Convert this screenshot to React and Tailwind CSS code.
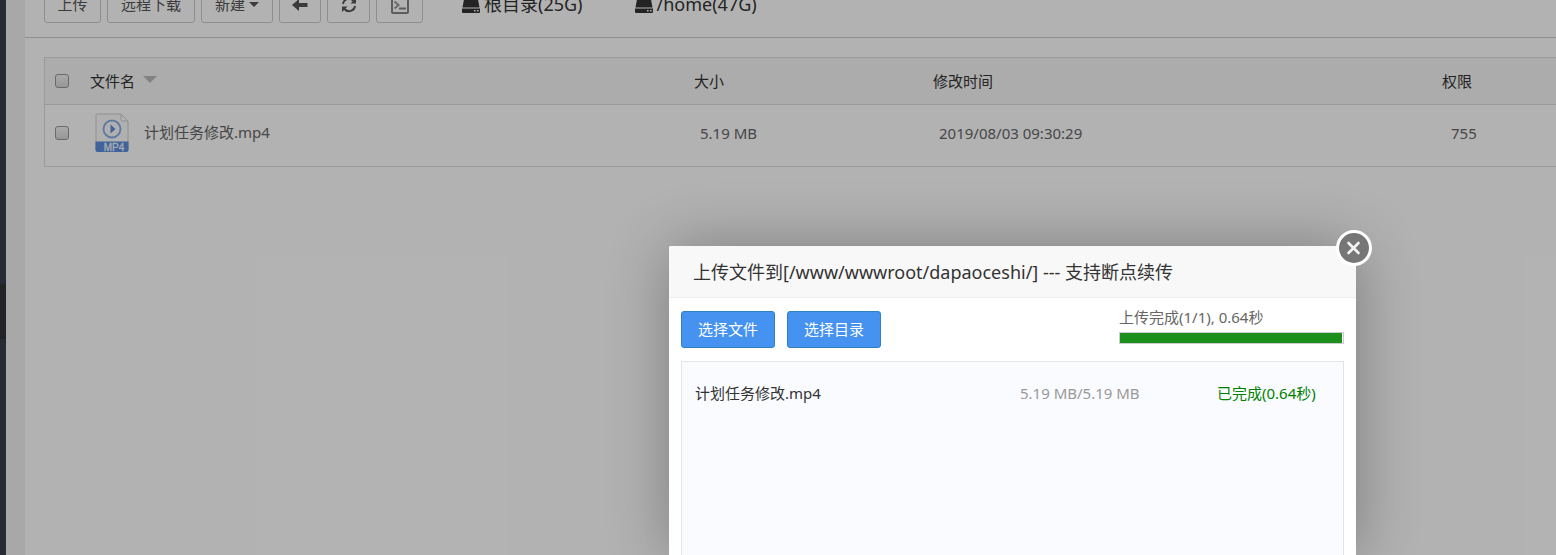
import React from 'react';

const files = [
  { name: '计划任务修改.mp4', size: '5.19 MB', time: '2019/08/03 09:30:29', mode: '755' },
];

const uploads = [
  { name: '计划任务修改.mp4', progress: '5.19 MB/5.19 MB', status: '已完成(0.64秒)' },
];

const disks = ['根目录(25G)', '/home(47G)'];

const ToolButton = ({ label, className = '', children }) => (
  <button
    type="button"
    aria-label={label}
    className={`flex h-[37px] items-center justify-center rounded-[3px] border border-[#ccc] bg-white text-[15px] text-[#555] ${className}`}
  >
    {children}
  </button>
);

const DiskIcon = () => (
  <svg width="18" height="18" viewBox="0 0 18 18" className="shrink-0" fill="#333">
    <path d="M3.500 1h11a1 1 0 0 1 1 .8L17.500 12.500H.5L2.500 1.800a1 1 0 0 1 1-.8z" />
    <path fillRule="evenodd" d="M0 13.500h18V17a1 1 0 0 1-1 1H1a1 1 0 0 1-1-1zM12 15v1.600h1.600V15zM15 15v1.600h1.600V15z" />
  </svg>
);

const Mp4Icon = () => (
  <svg width="34" height="40" viewBox="0 0 34 40" className="shrink-0">
    <path d="M2.500 1h23.500l7 7v28.500a2 2 0 0 1-2 2H3a2 2 0 0 1-2-2V2.500A1.500 1.500 0 0 1 2.500 1z" fill="#fcfcfc" stroke="#d0d0d0" />
    <path d="M26 1v5.500A1.500 1.500 0 0 0 27.500 8H33z" fill="#fff" stroke="#d0d0d0" />
    <circle cx="17" cy="16" r="8.500" fill="none" stroke="#8aaee6" strokeWidth="1.800" />
    <path d="M15.500 11.500l5 4.500-5 4.500z" fill="#5b8fdd" />
    <path d="M.5 28.500h33V37a2 2 0 0 1-2 2h-29a2 2 0 0 1-2-2z" fill="#5b8fdd" />
    <text x="19" y="37.500" textAnchor="middle" fontSize="10" fill="#f2f6fd" stroke="#f2f6fd" strokeWidth="0.300" fontFamily="Liberation Sans, sans-serif">MP4</text>
  </svg>
);

const Checkbox = ({ label }) => (
  <input
    type="checkbox"
    aria-label={label}
    className="block size-[14px] appearance-none rounded-[3px] border border-[#999] bg-linear-to-b from-[#f4f4f4] to-[#d8d8d8]"
  />
);

const Toolbar = () => (
  <div className="-mt-[14px] flex items-center gap-1.5 border-b border-[#ccc] pb-[14px] pl-[19px]">
    <ToolButton label="上传" className="w-[57px]">上传</ToolButton>
    <ToolButton label="远程下载" className="w-[88px]">远程下载</ToolButton>
    <ToolButton label="新建" className="w-[72px] gap-1">
      新建
      <svg width="10" height="5" viewBox="0 0 10 5" fill="#555"><path d="M0 0h10L5 5z" /></svg>
    </ToolButton>
    <ToolButton label="返回" className="w-[42px]">
      <svg width="16" height="14" viewBox="0 0 16 14" fill="#555">
        <path d="M0 7l7-6v4h8.500v4H7v4z" />
      </svg>
    </ToolButton>
    <ToolButton label="刷新" className="w-[43px]">
      <svg width="16" height="16" viewBox="0 0 16 16" fill="none" stroke="#555" strokeWidth="2">
        <path d="M2 7a6 6 0 0 1 10.500-3M14 9a6 6 0 0 1-10.500 3" />
        <path d="M15 1v5.500H9.500zM1 15V9.500h5.500z" fill="#555" stroke="none" />
      </svg>
    </ToolButton>
    <ToolButton label="终端" className="w-[47px]">
      <svg width="18" height="18" viewBox="0 0 18 18" fill="none" stroke="#858585" strokeWidth="2">
        <rect x="1" y="1" width="16" height="16" rx="1" />
        <path d="M3.500 5.500l4 3.500-4 3.500" stroke="#999" />
        <path d="M8 12.500h7" />
      </svg>
    </ToolButton>
    <div className="ml-[33px] flex gap-[52px] pb-0.5 text-[18px] leading-6 text-[#333]">
      {disks.map((disk) => (
        <a key={disk} href="#" className="flex items-center gap-1">
          <DiskIcon />
          {disk}
        </a>
      ))}
    </div>
  </div>
);

const FileTable = () => (
  <div className="-mr-5 ml-[19px] mt-[19px] border border-[#ddd]">
    <table className="w-full table-fixed border-collapse text-left text-[15px]">
      <colgroup>
        <col className="w-[45px]" />
        <col className="w-[604px]" />
        <col className="w-[239px]" />
        <col className="w-[509px]" />
        <col />
      </colgroup>
      <thead className="bg-[#f6f6f6] text-[#333]">
        <tr className="h-[46px] border-b border-[#ddd]">
          <th className="pl-[10px]"><Checkbox label="全选" /></th>
          <th className="font-normal">
            <span className="flex items-center gap-2">
              文件名
              <svg width="14" height="7" viewBox="0 0 14 7" className="mb-0.5" fill="#bbb"><path d="M0 0h14L7 7z" /></svg>
            </span>
          </th>
          <th className="font-normal">大小</th>
          <th className="font-normal">修改时间</th>
          <th className="font-normal">权限</th>
        </tr>
      </thead>
      <tbody className="text-[#666]">
        {files.map((file) => (
          <tr key={file.name} className="h-[62px]">
            <td className="pb-1 pl-[10px]"><Checkbox label={file.name} /></td>
            <td className="pb-1 pl-[5px]">
              <span className="flex items-center gap-[15px]">
                <Mp4Icon />
                <a href="#" className="pb-0.5">{file.name}</a>
              </span>
            </td>
            <td className="pb-1 pl-1.5">{file.size}</td>
            <td className="pb-1 pl-1.5">{file.time}</td>
            <td className="pb-1 pl-[9px]">{file.mode}</td>
          </tr>
        ))}
      </tbody>
    </table>
  </div>
);

const UploadDialog = () => (
  <div
    role="dialog"
    aria-labelledby="upload-title"
    className="absolute bottom-0 left-[669px] top-[246px] flex w-[687px] flex-col rounded-t-[2px] bg-white shadow-[1px_1px_62px_rgba(0,0,0,0.3)]"
  >
    <h2 id="upload-title" className="h-[52px] rounded-t-[2px] border-b border-[#eee] bg-[#f8f8f8] pl-6 text-[18px] leading-[52px] text-[#333]">
      上传文件到[/www/wwwroot/dapaoceshi/] --- 支持断点续传
    </h2>
    <button type="button" aria-label="关闭" className="absolute -right-4 -top-4 size-9">
      <svg width="36" height="36" viewBox="0 0 36 36">
        <circle cx="18" cy="18" r="16.500" fill="#767676" stroke="#fff" strokeWidth="3" />
        <path d="M12.500 13l10 10M22.500 13l-10 10" stroke="#f4f4f4" strokeWidth="2.600" strokeLinecap="round" />
      </svg>
    </button>

    <div className="flex flex-1 flex-col px-3 pt-[13px]">
      <div className="flex h-[50px] items-start gap-3">
        <button type="button" className="h-[37px] w-[94px] rounded-[3px] border border-[#3080bd] bg-[#4592f0] text-[15px] text-white">选择文件</button>
        <button type="button" className="h-[37px] w-[94px] rounded-[3px] border border-[#3080bd] bg-[#4592f0] text-[15px] text-white">选择目录</button>
        <div className="-mt-1 ml-auto w-[225px] text-[15px] leading-5 text-[#666]">
          上传完成(1/1), 0.64秒
          <div className="mt-[5px] h-3 border border-[#ccc] pr-px">
            <div className="h-full bg-[#1c8f1c]" />
          </div>
        </div>
      </div>

      {/* Upload queue */}
      <ul className="flex-1 border border-b-0 border-[#e3e4e8] bg-[#fafbff] px-[13px] pt-[19px] text-[15px] leading-6">
        {uploads.map((item) => (
          <li key={item.name} className="flex">
            <span className="w-[325px] text-[#333]">{item.name}</span>
            <span className="w-[197px] text-[#999]">{item.progress}</span>
            <span className="whitespace-nowrap text-[#008000]">{item.status}</span>
          </li>
        ))}
      </ul>
    </div>
  </div>
);

export default function App() {
  return (
    <div className="relative flex h-screen overflow-hidden bg-[#f1f1f1] font-['Noto_Sans','Noto_Sans_CJK_SC',sans-serif]">
      <aside className="w-1.5 shrink-0 bg-[#383d4a] pt-[284px]">
        <div className="h-[55px] bg-[#303338]" />
      </aside>
      <main className="ml-[19px] min-w-0 flex-1 bg-white">
        <Toolbar />
        <FileTable />
      </main>
      <div className="absolute inset-0 bg-black/30" />
      <UploadDialog />
    </div>
  );
}
